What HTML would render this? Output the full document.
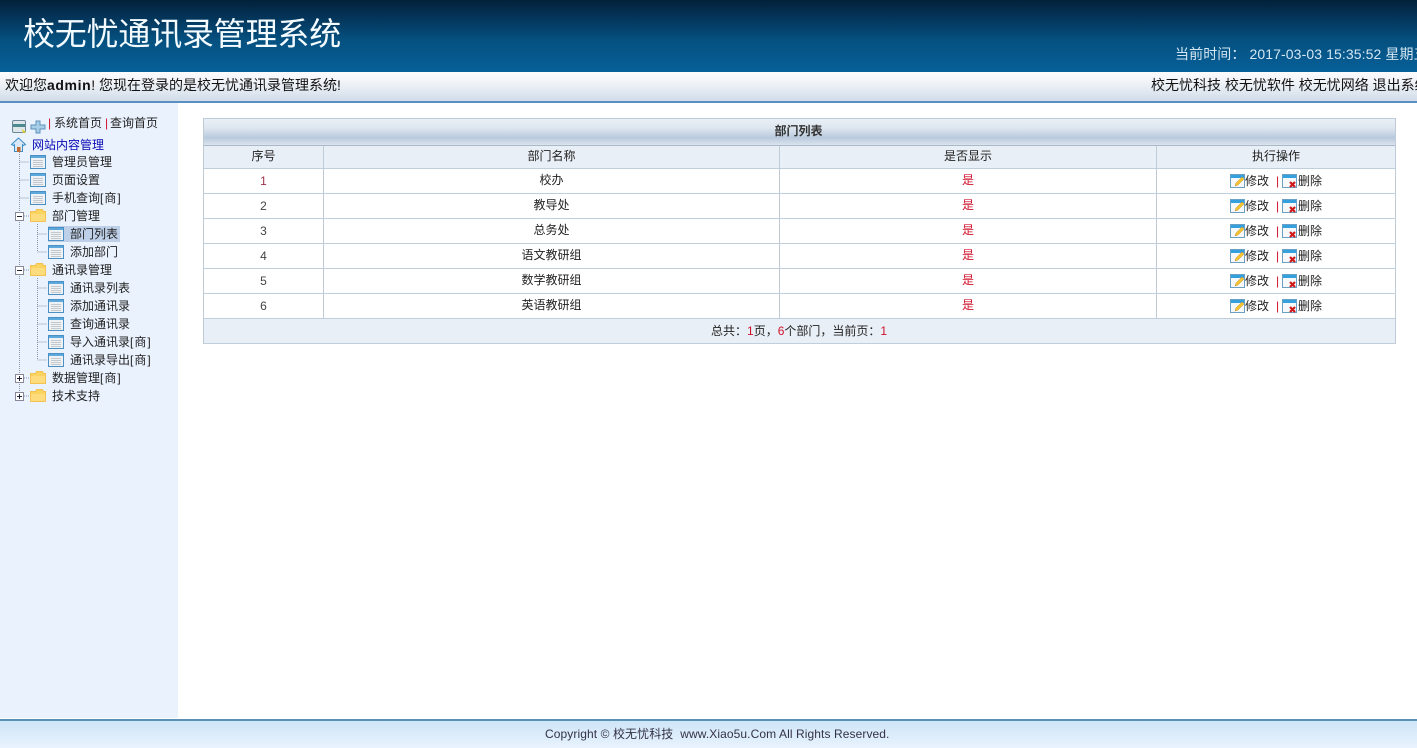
<!DOCTYPE html>
<html lang="zh"><head><meta charset="utf-8"><title>校无忧通讯录管理系统</title>
<style>
*{box-sizing:border-box}
html,body{margin:0;padding:0;width:1417px;height:748px;overflow:hidden;background:#fff;font-family:"Liberation Sans","WenQuanYi Zen Hei","Noto Sans CJK SC",sans-serif;color:#222}
.a{position:absolute;white-space:nowrap}
#hd{left:0;top:0;width:1417px;height:72px;background:linear-gradient(#02213a 0,#04355a 25%,#05507f 55%,#066099 100%)}
#bar{left:0;top:72px;width:1417px;height:31px;background:linear-gradient(#fbfcfd,#eef2f7 40%,#d3deea 96%);border-bottom:2px solid #5a8fc3}
#side{left:0;top:103px;width:178px;height:615px;background:#eaf2fe}
#ft{left:0;top:719px;width:1417px;height:29px;background:linear-gradient(#cfe5f9,#e8f3fd);border-top:2px solid #5b8fb4}
.t{font-size:12px;line-height:14px;height:14px;color:#222}
.c{text-align:center}
.r{color:#d0112b}
.l{position:absolute;background:#c0cbd8}
.h{position:absolute;left:203px;width:1193px;height:1px;background:#c0cfdc}
.s{letter-spacing:1px}
svg{position:absolute;overflow:visible}
</style></head><body>
<svg width="0" height="0" style="position:absolute"><defs>
<symbol id="pg" viewBox="0 0 16 14"><rect x=".5" y=".5" width="15" height="13" fill="#eef2f5" stroke="#4a90c2"/><rect x="1" y="1" width="14" height="2" fill="#5aa8dc"/><path d="M3 5.500h10M3 7.500h10M3 9.500h10M3 11.500h10" stroke="#c2c8ce"/></symbol>
<symbol id="fo" viewBox="0 0 16 13"><path d="M.5 2.500h5l1-2h6l1 2h2v10H.5z" fill="#fbd35f" stroke="#f3c252"/><rect x="1" y="5" width="14" height="7" fill="#fddc7e"/></symbol>
<symbol id="mi" viewBox="0 0 9 9"><rect x=".5" y=".5" width="8" height="8" fill="#fff" stroke="#889"/><path d="M2 4.500h5" stroke="#223"/></symbol>
<symbol id="pl" viewBox="0 0 9 9"><rect x=".5" y=".5" width="8" height="8" fill="#fff" stroke="#889"/><path d="M2 4.500h5M4.500 2v5" stroke="#223"/></symbol>
<symbol id="ed" viewBox="0 0 16 15"><rect x=".5" y="1.500" width="14" height="13" fill="#f6f8fa" stroke="#6aa0c4"/><rect x="1" y="2" width="13" height="3" fill="#35a0de"/><path d="M5 13l1-3 6-6 2 2-6 6z" fill="#f4c430" stroke="#c8902a" stroke-width=".5"/></symbol>
<symbol id="de" viewBox="0 0 16 15"><rect x=".5" y="1.500" width="14" height="13" fill="#f6f8fa" stroke="#6aa0c4"/><rect x="1" y="2" width="13" height="3" fill="#35a0de"/><path d="M8 9l5 5M13 9l-5 5" stroke="#d01818" stroke-width="2.200"/></symbol>
</defs></svg>

<div class="a" id="hd"></div>
<div class="a" style="left:23px;top:14px;font-size:32px;line-height:40px;color:#f4fbff;letter-spacing:-.2px">校无忧通讯录管理系统</div>
<div class="a" style="left:1175px;top:46px;font-size:14px;line-height:16px;color:#d4e6f2;letter-spacing:.1px">当前时间：&nbsp;2017-03-03 15:35:52 星期五</div>

<div class="a" id="bar"></div>
<div class="a" style="left:5px;top:77px;font-size:14px;line-height:17px;color:#111">欢迎您<b style="letter-spacing:.6px">admin</b>! 您现在登录的是校无忧通讯录管理系统!</div>
<div class="a" style="left:1151px;top:77px;font-size:14px;line-height:17px;color:#111;width:266px;overflow:hidden">校无忧科技 校无忧软件 校无忧网络 退出系统</div>

<div class="a" id="side"></div>
<svg style="left:0;top:0" width="178" height="420">
<g stroke="#8a97a6" stroke-dasharray="1 1" fill="none">
<path d="M19.500 152v245M19.500 162h10M19.500 180h10M19.500 198h10M37.500 224v28M37.500 234h10M37.500 252h10M37.500 278v82M37.500 288h10M37.500 306h10M37.500 324h10M37.500 342h10M37.500 360h10M24 216h5M24 270h5M24 378h5M24 396h5"/>
</g>
<use href="#pg" x="30" y="155" width="16" height="14"/><use href="#pg" x="30" y="173" width="16" height="14"/><use href="#pg" x="30" y="191" width="16" height="14"/>
<use href="#mi" x="15" y="212" width="9" height="9"/><use href="#fo" x="30" y="209" width="16" height="13"/>
<rect x="48" y="226" width="72" height="16" fill="#bed0e8"/>
<use href="#pg" x="48" y="227" width="16" height="14"/><use href="#pg" x="48" y="245" width="16" height="14"/>
<use href="#mi" x="15" y="266" width="9" height="9"/><use href="#fo" x="30" y="263" width="16" height="13"/>
<use href="#pg" x="48" y="281" width="16" height="14"/><use href="#pg" x="48" y="299" width="16" height="14"/><use href="#pg" x="48" y="317" width="16" height="14"/><use href="#pg" x="48" y="335" width="16" height="14"/><use href="#pg" x="48" y="353" width="16" height="14"/>
<use href="#pl" x="15" y="374" width="9" height="9"/><use href="#fo" x="30" y="371" width="16" height="13"/>
<use href="#pl" x="15" y="392" width="9" height="9"/><use href="#fo" x="30" y="389" width="16" height="13"/>
<!-- top icons -->
<rect x="12.500" y="120.500" width="13" height="12" rx="1.500" fill="#dfe6ea" stroke="#6c8698"/><rect x="13" y="124" width="12" height="3" fill="#4d8a8f"/><path d="M22 129l4 3-3 1z" fill="#e8d020"/>
<path d="M31 125h5v-4h4v4h5v4h-5v4h-4v-4h-5z" fill="#a8cfe8" stroke="#5e92b8"/>
<path d="M18.500 138l-7 6.500 2 1 1-.8v6.800h8v-6.800l1 .8 2-1z" fill="#d8e8f6" stroke="#3e8cc4"/><rect x="17" y="147" width="3.500" height="5" fill="#c06a30"/>
</svg>
<div class="a t" style="left:48px;top:116px"><span class="r">|</span></div>
<div class="a t" style="left:54px;top:116px">系统首页</div>
<div class="a t" style="left:105px;top:116px"><span class="r">|</span></div>
<div class="a t" style="left:110px;top:116px">查询首页</div>
<div class="a t" style="left:32px;top:138px;color:#0a0ab4">网站内容管理</div>
<div class="a t" style="left:52px;top:155px">管理员管理</div>
<div class="a t" style="left:52px;top:173px">页面设置</div>
<div class="a t" style="left:52px;top:191px">手机查询<span class="s">[商]</span></div>
<div class="a t" style="left:52px;top:209px">部门管理</div>
<div class="a t" style="left:70px;top:227px">部门列表</div>
<div class="a t" style="left:70px;top:245px">添加部门</div>
<div class="a t" style="left:52px;top:263px">通讯录管理</div>
<div class="a t" style="left:70px;top:281px">通讯录列表</div>
<div class="a t" style="left:70px;top:299px">添加通讯录</div>
<div class="a t" style="left:70px;top:317px">查询通讯录</div>
<div class="a t" style="left:70px;top:335px">导入通讯录<span class="s">[商]</span></div>
<div class="a t" style="left:70px;top:353px">通讯录导出<span class="s">[商]</span></div>
<div class="a t" style="left:52px;top:371px">数据管理<span class="s">[商]</span></div>
<div class="a t" style="left:52px;top:389px">技术支持</div>

<!-- table -->
<div class="a" style="left:203px;top:118px;width:1193px;height:28px;background:linear-gradient(#eaf0f6,#dde6f0 35%,#b9c9dd 72%,#dbe4ef);border:1px solid #bccbd8;border-bottom:1px solid #aab9c8"></div>
<div class="a c t" style="left:202px;top:124px;width:1193px;font-weight:bold;color:#333">部门列表</div>
<div class="a" style="left:204px;top:146px;width:1191px;height:22px;background:#e9eff6"></div>
<div class="a" style="left:204px;top:319px;width:1191px;height:24px;background:#e9eff6"></div>
<div class="h" style="top:168px"></div><div class="h" style="top:193px"></div><div class="h" style="top:218px"></div><div class="h" style="top:243px"></div><div class="h" style="top:268px"></div><div class="h" style="top:293px"></div><div class="h" style="top:318px"></div><div class="h" style="top:343px"></div>
<div class="l" style="left:203px;top:118px;width:1px;height:226px"></div>
<div class="l" style="left:1395px;top:118px;width:1px;height:226px"></div>
<div class="l" style="left:323px;top:146px;width:1px;height:172px"></div>
<div class="l" style="left:779px;top:146px;width:1px;height:172px"></div>
<div class="l" style="left:1156px;top:146px;width:1px;height:172px"></div>

<div class="a c t" style="left:204px;top:149px;width:119px">序号</div>
<div class="a c t" style="left:324px;top:149px;width:455px">部门名称</div>
<div class="a c t" style="left:780px;top:149px;width:376px">是否显示</div>
<div class="a c t" style="left:1157px;top:149px;width:238px">执行操作</div>

<div class="a c t r" style="left:204px;top:174px;width:119px;color:#a03048">1</div><div class="a c t" style="left:324px;top:173px;width:455px">校办</div><div class="a c t r" style="left:780px;top:173px;width:376px">是</div>
<div class="a c t" style="left:204px;top:199px;width:119px;color:#444">2</div><div class="a c t" style="left:324px;top:198px;width:455px">教导处</div><div class="a c t r" style="left:780px;top:198px;width:376px">是</div>
<div class="a c t" style="left:204px;top:224px;width:119px;color:#444">3</div><div class="a c t" style="left:324px;top:223px;width:455px">总务处</div><div class="a c t r" style="left:780px;top:223px;width:376px">是</div>
<div class="a c t" style="left:204px;top:249px;width:119px;color:#444">4</div><div class="a c t" style="left:324px;top:248px;width:455px">语文教研组</div><div class="a c t r" style="left:780px;top:248px;width:376px">是</div>
<div class="a c t" style="left:204px;top:274px;width:119px;color:#444">5</div><div class="a c t" style="left:324px;top:273px;width:455px">数学教研组</div><div class="a c t r" style="left:780px;top:273px;width:376px">是</div>
<div class="a c t" style="left:204px;top:299px;width:119px;color:#444">6</div><div class="a c t" style="left:324px;top:298px;width:455px">英语教研组</div><div class="a c t r" style="left:780px;top:298px;width:376px">是</div>

<svg style="left:0;top:0" width="1417" height="330">
<use href="#ed" x="1230" y="173" width="16" height="15"/><use href="#de" x="1282" y="173" width="16" height="15"/>
<use href="#ed" x="1230" y="198" width="16" height="15"/><use href="#de" x="1282" y="198" width="16" height="15"/>
<use href="#ed" x="1230" y="223" width="16" height="15"/><use href="#de" x="1282" y="223" width="16" height="15"/>
<use href="#ed" x="1230" y="248" width="16" height="15"/><use href="#de" x="1282" y="248" width="16" height="15"/>
<use href="#ed" x="1230" y="273" width="16" height="15"/><use href="#de" x="1282" y="273" width="16" height="15"/>
<use href="#ed" x="1230" y="298" width="16" height="15"/><use href="#de" x="1282" y="298" width="16" height="15"/>
</svg>
<div class="a t" style="left:1245px;top:174px">修改</div><div class="a t r" style="left:1276px;top:174px">|</div><div class="a t" style="left:1298px;top:174px">删除</div>
<div class="a t" style="left:1245px;top:199px">修改</div><div class="a t r" style="left:1276px;top:199px">|</div><div class="a t" style="left:1298px;top:199px">删除</div>
<div class="a t" style="left:1245px;top:224px">修改</div><div class="a t r" style="left:1276px;top:224px">|</div><div class="a t" style="left:1298px;top:224px">删除</div>
<div class="a t" style="left:1245px;top:249px">修改</div><div class="a t r" style="left:1276px;top:249px">|</div><div class="a t" style="left:1298px;top:249px">删除</div>
<div class="a t" style="left:1245px;top:274px">修改</div><div class="a t r" style="left:1276px;top:274px">|</div><div class="a t" style="left:1298px;top:274px">删除</div>
<div class="a t" style="left:1245px;top:299px">修改</div><div class="a t r" style="left:1276px;top:299px">|</div><div class="a t" style="left:1298px;top:299px">删除</div>

<div class="a t" style="left:711px;top:324px">总共：<span class="r">1</span>页，<span class="r">6</span>个部门，当前页：<span class="r">1</span></div>

<div class="a" id="ft"></div>
<div class="a t" style="left:545px;top:727px;color:#334;font-size:12px;letter-spacing:.09px">Copyright © 校无忧科技&nbsp; www.Xiao5u.Com All Rights Reserved.</div>
</body></html>
